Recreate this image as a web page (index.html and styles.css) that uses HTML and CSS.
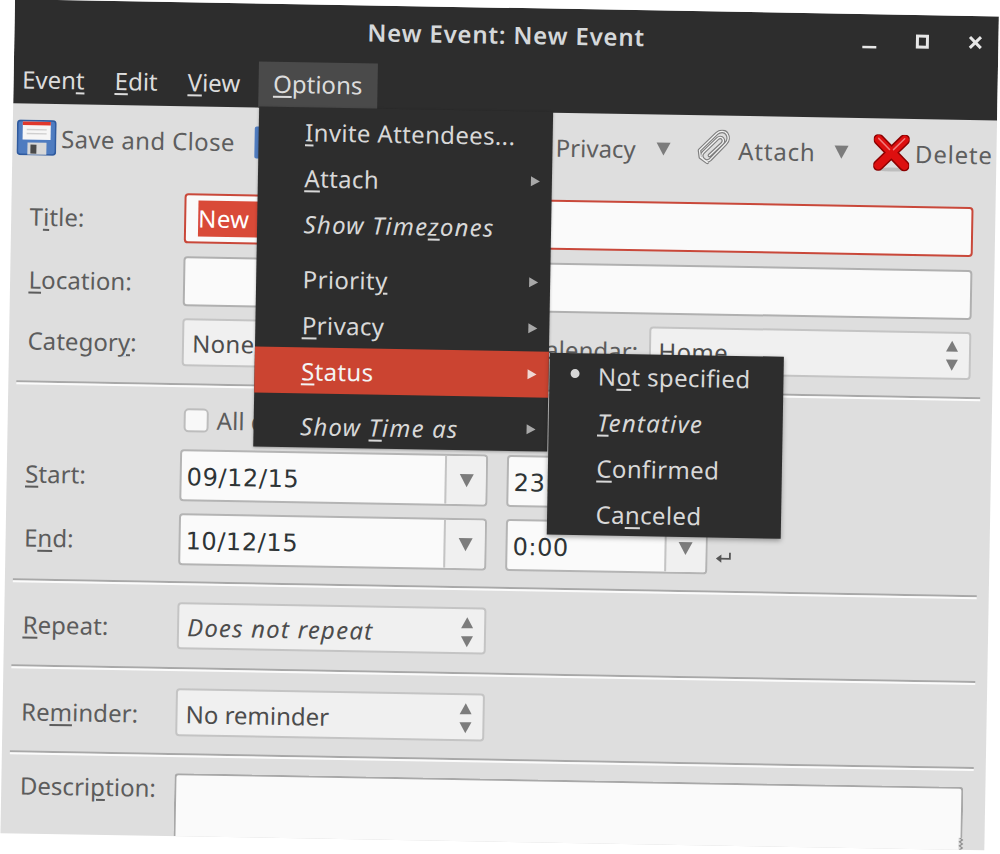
FILE: index.html
```html
<!DOCTYPE html>
<html lang="en">
<head>
<meta charset="utf-8">
<title>New Event: New Event</title>
<link rel="stylesheet" href="styles.css">
</head>
<body>
<div class="stage">
<div class="window">
  <header class="dark">
    <div class="titlebar">
      <span></span>
      <div class="title">New Event: New Event</div>
      <div class="controls">
        <svg class="ctl" viewBox="0 0 16 16"><path d="M1 14h14" stroke="#e6e6e6" stroke-width="2.6" fill="none"/></svg>
        <svg class="ctl" viewBox="0 0 16 16"><rect x="3" y="2" width="10" height="11" stroke="#e6e6e6" stroke-width="3" fill="none"/></svg>
        <svg class="ctl" viewBox="0 0 16 16"><path d="M2.500 2l11 11M13.500 2l-11 11" stroke="#e6e6e6" stroke-width="3" fill="none"/></svg>
      </div>
    </div>
    <nav class="menubar">
      <div class="mb first">Even<u>t</u></div>
      <div class="mb"><u>E</u>dit</div>
      <div class="mb view"><u>V</u>iew</div>
      <div class="mb open"><u>O</u>ptions</div>
    </nav>
  </header>

  <div class="toolbar">
    <svg class="ico-save" viewBox="0 0 40 36">
      <rect x="1" y="1" width="38" height="34" rx="3" fill="#4f7cc0" stroke="#2f5a9e" stroke-width="1.6"/>
      <rect x="6" y="2" width="28" height="18" fill="#f6f6f6"/>
      <rect x="6" y="2" width="28" height="3.5" fill="#e0382c"/>
      <path d="M10 10h20M10 14h20" stroke="#cfcfcf" stroke-width="1.4"/>
      <rect x="11" y="23" width="19" height="12" fill="#d8d8d8"/>
      <rect x="14" y="25" width="6" height="9" fill="#4a4a4a"/>
    </svg>
    <span class="tb-text save">Save and Close</span>
    <svg class="ico-send" viewBox="0 0 40 34"><rect x="1" y="1" width="38" height="32" rx="2" fill="#4f7cc0"/></svg>
    <span class="tb-text privacy">Privacy</span>
    <i class="tri tb-tri1"></i>
    <svg class="ico-clip" viewBox="0 0 34 36">
      <g fill="none" stroke-linecap="round" stroke-linejoin="round">
        <path d="M11 33L4 28 3 21 20 4c3-3 8-3 10 0s2 7-1 10L14 30c-2 2-5 2-7 0s-2-5 0-7L21 9c1.500-1.500 4-1.500 5 0s1 3.500-.5 5L13 26" stroke="#7e7e7e" stroke-width="3.6"/>
        <path d="M11 33L4 28 3 21 20 4c3-3 8-3 10 0s2 7-1 10L14 30c-2 2-5 2-7 0s-2-5 0-7L21 9c1.500-1.500 4-1.500 5 0s1 3.500-.5 5L13 26" stroke="#f2f2f2" stroke-width="1.300"/>
      </g>
    </svg>
    <span class="tb-text attach">Attach</span>
    <i class="tri tb-tri2"></i>
    <svg class="ico-del" viewBox="0 0 36 38">
      <ellipse cx="18" cy="35" rx="17" ry="2" fill="#bdbdbd"/>
      <path d="M5 5L31 31M31 5L5 31" stroke="#8c0000" stroke-width="11" stroke-linecap="round"/>
      <path d="M5 5L31 31M31 5L5 31" stroke="#dd0f0f" stroke-width="8" stroke-linecap="round"/>
      <path d="M5 4L16 15M31 4L20 15" stroke="#f07a7a" stroke-width="1.5" stroke-linecap="round"/>
    </svg>
    <span class="tb-text delete">Delete</span>
  </div>

  <main class="form">
    <div class="row r-title">
      <label class="lbl">T<u>i</u>tle:</label>
      <div class="entry focus"><span class="sel">New Event</span></div>
    </div>
    <div class="row r-loc">
      <label class="lbl"><u>L</u>ocation:</label>
      <div class="entry"></div>
    </div>
    <div class="row r-cat">
      <label class="lbl">Categor<u>y</u>:</label>
      <div class="cat-fields">
        <div class="combo cat-combo"><span>None</span></div>
        <label class="lbl cal-label">Calendar:</label>
        <div class="combo cal-combo"><span>Home</span><i class="updown"></i></div>
      </div>
    </div>
    <hr class="sep s1">
    <div class="row r-allday">
      <span></span>
      <div class="allday"><i class="check"></i><span class="lbl">All day event</span></div>
    </div>
    <div class="row r-start">
      <label class="lbl"><u>S</u>tart:</label>
      <div class="dt">
        <div class="dcombo date"><span class="dval">09/12/15</span><span class="dbtn"><i class="tri"></i></span></div>
        <div class="dcombo time"><span class="dval">23:00</span><span class="dbtn"><i class="tri"></i></span></div>
      </div>
    </div>
    <div class="row r-end">
      <label class="lbl">E<u>n</u>d:</label>
      <div class="dt">
        <div class="dcombo date"><span class="dval">10/12/15</span><span class="dbtn"><i class="tri"></i></span></div>
        <div class="dcombo time"><span class="dval">0:00</span><span class="dbtn"><i class="tri"></i></span></div>
        <svg class="ico-enter" viewBox="0 0 16 12"><path d="M14.500 1v6H3" stroke="#555" stroke-width="1.800" fill="none"/><path d="M0.500 7L6 2.800v8.400z" fill="#555"/></svg>
      </div>
    </div>
    <hr class="sep s2">
    <div class="row r-rep">
      <label class="lbl"><u>R</u>epeat:</label>
      <div class="combo small rep"><em>Does not repeat</em><i class="updown"></i></div>
    </div>
    <hr class="sep s3">
    <div class="row r-rem">
      <label class="lbl">Re<u>m</u>inder:</label>
      <div class="combo small rem"><span>No reminder</span><i class="updown"></i></div>
    </div>
    <hr class="sep s4">
    <div class="row r-desc">
      <label class="lbl">Descri<u>p</u>tion:</label>
      <div class="textarea"><svg class="grip" viewBox="0 0 5 12"><path d="M1 0l3 2-3 2 3 2-3 2 3 2-3 2" stroke="#8e8e8e" stroke-width="1.2" fill="none"/></svg></div>
    </div>
  </main>

  <div class="menu main-menu">
    <div class="mi"><span><u>I</u>nvite Attendees...</span></div>
    <div class="mi"><span><u>A</u>ttach</span><i class="arr"></i></div>
    <div class="mi"><em>Show Time<u>z</u>ones</em></div>
    <div class="msep"></div>
    <div class="mi"><span>Priorit<u>y</u></span><i class="arr"></i></div>
    <div class="mi"><span><u>P</u>rivacy</span><i class="arr"></i></div>
    <div class="mi active"><span><u>S</u>tatus</span><i class="arr"></i></div>
    <div class="msep wide"></div>
    <div class="mi"><em>Show <u>T</u>ime as</em><i class="arr"></i></div>
  </div>

  <div class="menu sub-menu">
    <div class="mi"><i class="dot"></i><span>N<u>o</u>t specified</span></div>
    <div class="mi"><em><u>T</u>entative</em></div>
    <div class="mi"><span><u>C</u>onfirmed</span></div>
    <div class="mi"><span>Ca<u>n</u>celed</span></div>
  </div>
</div>
</div>
</body>
</html>
```

FILE: styles.css
```css
* { box-sizing: border-box; }
html, body { margin: 0; height: 100%; overflow: hidden; background: #fff; }
body { font-family: "Noto Sans", "Open Sans", sans-serif; font-size: 24px; letter-spacing: .35px; line-height: 31px; }
u { text-decoration-thickness: 2px; text-underline-offset: 3px; }
em { font-style: italic; letter-spacing: 1.2px; }

.stage { width: 1000px; height: 854px; transform: rotate(1deg); transform-origin: 0 0; }
.window { position: relative; width: 984.5px; height: 834.5px; margin-left: 14.5px; top: -1.5px; background: #dedede; overflow: hidden; }

.dark { background: #2d2d2d; color: #dcdcdc; height: 104.5px; }
.titlebar { height: 58.5px; display: grid; grid-template-columns: 1fr auto 1fr; align-items: center; }
.title { font-weight: 600; color: #d5d8da; letter-spacing: .8px; margin-top: -5px; }
.controls { display: flex; justify-content: flex-end; gap: 37px; padding: 0 15px 4px 0; }
.ctl { width: 16px; height: 16px; }

.menubar { display: flex; height: 46px; letter-spacing: 0; }
.mb { padding: 0 15px; line-height: 44px; }
.mb.first { padding-left: 9px; }
.mb.view { padding-right: 18px; }
.mb.open { background: #4a4a4a; }

.toolbar { height: 74px; padding-bottom: 5px; display: flex; align-items: center; color: #5e5e5e; }
.tb-text { white-space: nowrap; }
.ico-save { width: 40px; height: 36px; margin: -2px 0 0 4.5px; flex: none; }
.save { margin-left: 4.5px; }
.ico-send { width: 40px; height: 34px; margin-left: 19px; flex: none; }
.privacy { margin-left: 262px; letter-spacing: 0; }
.tri { display: inline-block; width: 0; height: 0; border-left: 7px solid transparent; border-right: 7px solid transparent; border-top: 13px solid #7c7c7c; flex: none; }
.tb-tri1 { margin-left: 21px; }
.ico-clip { width: 34px; height: 36px; margin: -6px 0 0 25.5px; flex: none; }
.attach { margin-left: 8px; letter-spacing: .8px; }
.tb-tri2 { margin-left: 19px; }
.ico-del { width: 36px; height: 38px; margin-left: 24.5px; flex: none; }
.delete { margin-left: 6px; letter-spacing: .8px; }

.form { padding: 13px 22px 0 19px; display: flex; flex-direction: column; }
.row { display: grid; grid-template-columns: 154.5px 1fr; align-items: center; flex: none; }
.lbl { color: #5c5c5c; white-space: nowrap; letter-spacing: .05px; }

.entry { height: 50px; background: #fafafa; border: 2px solid #b0b0b0; border-radius: 4px; padding-left: 12px; line-height: 46px; }
.entry.focus { border-color: #c9483a; color: #fff; }
.sel { background: #d94a38; display: inline-block; line-height: 36px; }
.r-loc { margin-top: 13px; }
.r-cat { margin-top: 12px; }

.combo { height: 48px; background: #f0f0f0; border: 2px solid #c4c4c4; border-radius: 4px; display: flex; align-items: center; justify-content: space-between; padding: 0 10px 0 8px; color: #4c4c4c; }
.cat-fields { display: flex; align-items: center; }
.cat-combo { width: 300px; }
.cal-label { margin-left: 48px; width: 118.5px; text-align: right; padding-right: 19px; }
.cal-combo { flex: 1; }

.updown { position: relative; display: block; width: 14px; height: 30px; }
.updown::before, .updown::after { content: ""; position: absolute; left: 1px; border-left: 6px solid transparent; border-right: 6px solid transparent; }
.updown::before { top: 0; border-bottom: 11px solid #7c7c7c; }
.updown::after { bottom: 0; border-top: 11px solid #7c7c7c; }

.sep { border: 0; border-top: 2px solid #a8a8a8; border-bottom: 2px solid #fbfbfb; margin: 0 -10px 0 -10.5px; height: 4px; flex: none; }
.s1 { margin-top: 17px; }
.s2 { margin-top: 16px; }
.s3 { margin-top: 18.5px; }
.s4 { margin-top: 16.5px; }

.r-allday { margin-top: 17px; }
.allday { display: flex; align-items: center; gap: 8px; }
.check { width: 25px; height: 24px; background: #f8f8f8; border: 2px solid #bdbdbd; border-radius: 5px; margin-left: 3px; display: block; }
.r-start { margin-top: 14px; }
.r-end { margin-top: 12px; }
.dt { display: flex; align-items: center; }
.dcombo { height: 52px; display: flex; background: #fafafa; border: 2px solid #b4b4b4; border-radius: 4px; overflow: hidden; color: #2e3436; flex: none; }
.date { width: 308px; }
.time { width: 201.5px; margin-left: 19px; }
.dval { flex: 1; padding-left: 5px; line-height: 52px; font-family: "DejaVu Sans", sans-serif; letter-spacing: .6px; }
.dbtn { width: 41px; background: #f0f0f0; border-left: 2px solid #c4c4c4; display: flex; align-items: center; justify-content: center; }
.ico-enter { width: 16px; height: 12px; margin: 18px 0 0 8px; }

.r-rep { margin-top: 16.5px; }
.r-rep .lbl { margin-top: 3px; }
.r-rem { margin-top: 17px; }
.r-rem .lbl { margin-top: 2px; }
.small { width: 309px; }
.rep { height: 47px; padding-top: 3px; }
.rem { padding-top: 2px; letter-spacing: 0; }
.r-desc { margin-top: 16.5px; align-items: start; }
.r-desc .lbl { margin-top: -1px; }
.textarea { position: relative; height: 63px; background: #fafafa; border: 2px solid #a8a8a8; border-bottom: 0; border-radius: 4px 4px 0 0; }
.grip { position: absolute; right: -3px; bottom: 0; width: 5px; height: 12px; background: #dedede; }

.menu { position: absolute; background: #2d2d2d; color: #d8d8d8; }
.main-menu { left: 246.5px; top: 103.5px; width: 294px; height: 340px; padding-top: 1px; box-shadow: 0 1px 3px rgba(0,0,0,.3); }
.sub-menu { left: 541.5px; top: 344.5px; width: 234px; height: 182px; box-shadow: 0 2px 5px rgba(0,0,0,.35); }
.mi { height: 46px; display: flex; align-items: center; justify-content: space-between; padding: 0 12.5px 0 46.5px; white-space: nowrap; }
.sub-menu .mi { padding: 0 0 2px 48.5px; justify-content: flex-start; position: relative; }
.mi.active { background: #cb4431; color: #f4f4f4; }
.msep { height: 9px; }
.msep.wide { height: 9px; }
.arr { width: 0; height: 0; border-top: 5px solid transparent; border-bottom: 5px solid transparent; border-left: 9px solid #a8a8a8; flex: none; }
.active .arr { border-left-color: #f0d8d4; }
.dot { position: absolute; left: 21px; top: 16px; width: 9px; height: 9px; border-radius: 50%; background: #d8d8d8; }
```
